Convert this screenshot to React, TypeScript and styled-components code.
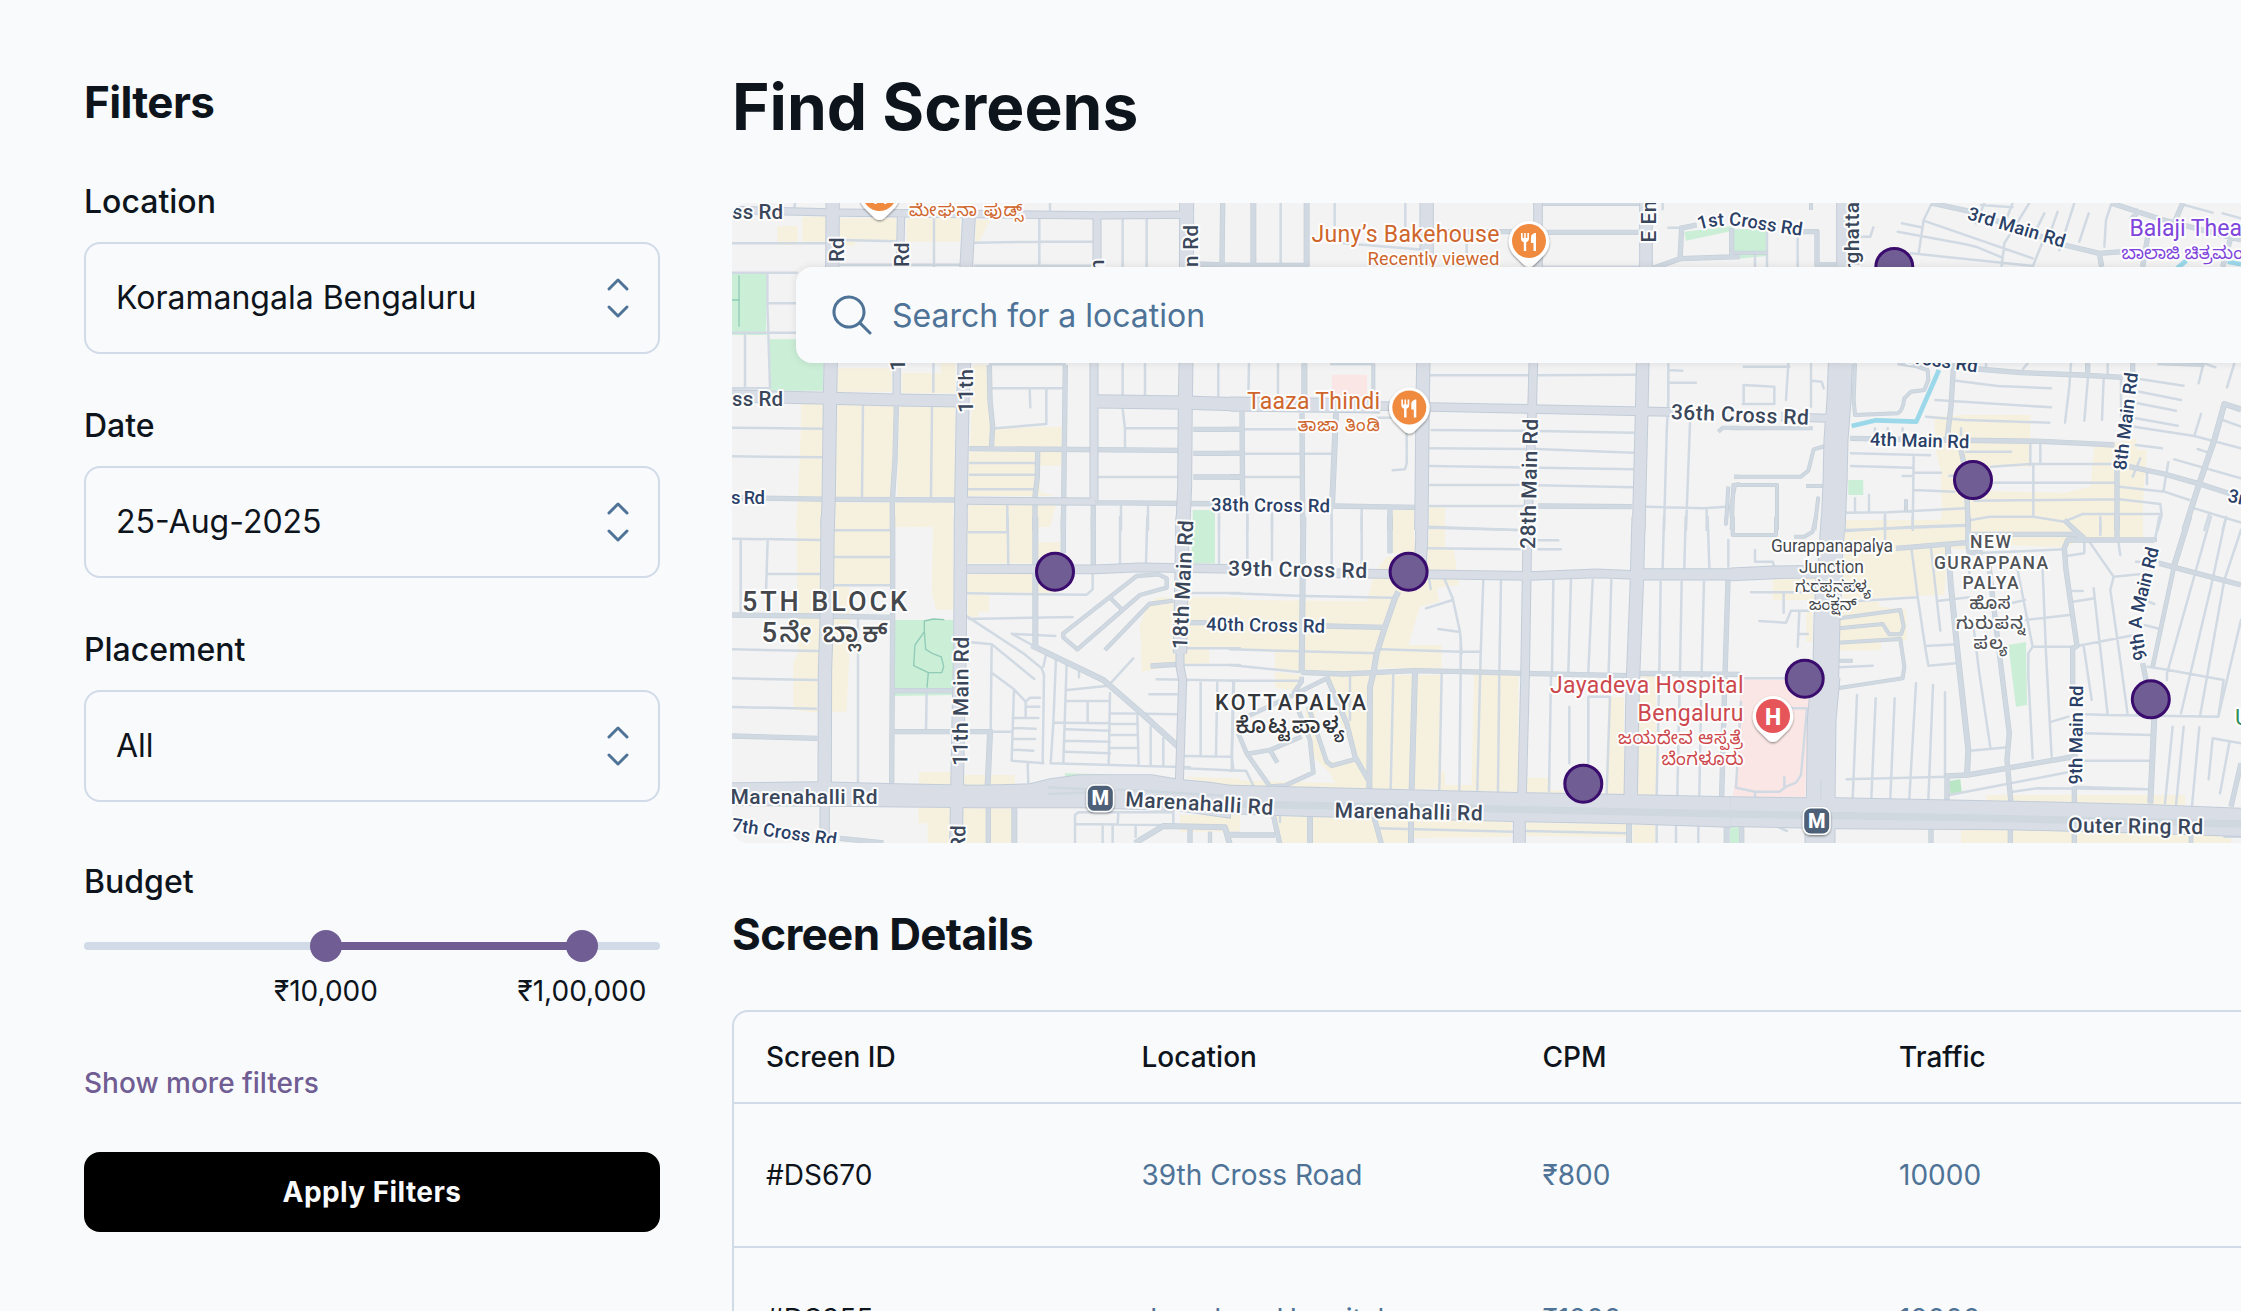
import React from 'react';
import styled, { createGlobalStyle } from 'styled-components';

const ink = '#0e141b';
const slate = '#4e7397';
const line = '#d0dbe7';
const purple = '#705d93';
const paper = '#f8fafc';

const GlobalStyle = createGlobalStyle`
  * { box-sizing: border-box; }
  html, body { margin: 0; padding: 0; background: ${paper}; }
  body { font-family: Inter, "Noto Sans", sans-serif; color: ${ink}; overflow: hidden; }
`;

const Page = styled.div`
  display: flex;
  gap: 8px;
  height: 1311px;
  padding-top: 35px;
  padding-left: 48px;
  overflow: hidden;
`;

const Sidebar = styled.aside`
  flex: none;
  width: 644px;
  display: flex;
  flex-direction: column;
`;

const SectionTitle = styled.h2`
  flex: none;
  margin: 0;
  padding: 40px 32px 24px 36px;
  font-size: 44px;
  line-height: 55px;
  font-weight: 700;
  letter-spacing: -0.015em;
`;

const DetailsTitle = styled(SectionTitle)`
  padding-left: 32px;
`;

const Field = styled.div`
  flex: none;
  display: flex;
  flex-direction: column;
  padding: 24px 32px 24px 36px;
`;

const Label = styled.span`
  display: block;
  font-size: 32px;
  line-height: 48px;
  font-weight: 500;
`;

const SelectBox = styled.button`
  display: flex;
  align-items: center;
  justify-content: space-between;
  height: 112px;
  margin-top: 16px;
  padding: 0 16px 0 30px;
  border: 2px solid ${line};
  border-radius: 16px;
  background: ${paper};
  color: ${ink};
  font: 400 32px/48px Inter, "Noto Sans", sans-serif;
  text-align: left;
`;

const BudgetHead = styled.div`
  padding: 32px 36px 0;
`;

const SliderRow = styled.div`
  padding: 24px 32px 0 36px;
`;

const Slider = styled.div`
  display: grid;
  grid-template-columns: 242px 256px 78px;
  align-items: center;
  height: 32px;
`;

const Segment = styled.div<{ $active?: boolean }>`
  position: relative;
  z-index: ${(p) => (p.$active ? 1 : 0)};
  height: 8px;
  background: ${(p) => (p.$active ? purple : line)};
  border-radius: ${(p) => (p.$active ? '0' : '4px')};
`;

const Thumb = styled.div<{ $end?: boolean }>`
  position: absolute;
  top: -12px;
  ${(p) => (p.$end ? 'right: -16px;' : 'left: -16px;')}
  width: 32px;
  height: 32px;
  border-radius: 50%;
  background: ${purple};
`;

const SliderValues = styled.div`
  display: grid;
  grid-template-columns: 114px 256px 256px;
  padding-top: 8px;
  span {
    font-size: 28px;
    line-height: 42px;
    text-align: center;
  }
`;

const MoreLink = styled.a`
  padding: 50px 36px 0;
  font-size: 28px;
  line-height: 42px;
  font-weight: 500;
  color: ${purple};
`;

const ApplyButton = styled.button`
  flex: none;
  margin: 48px 32px 0 36px;
  height: 80px;
  border: 0;
  border-radius: 16px;
  background: #000;
  color: ${paper};
  font: 700 28px/42px Inter, "Noto Sans", sans-serif;
  letter-spacing: 0.015em;
`;

const Main = styled.main`
  flex: none;
  width: 1920px;
  display: flex;
  flex-direction: column;
`;

const PageTitle = styled.h1`
  flex: none;
  margin: 0;
  padding: 32px 32px 56px;
  font-size: 64px;
  line-height: 80px;
  font-weight: 700;
`;

const MapFrame = styled.section`
  position: relative;
  flex: none;
  height: 640px;
  margin: 0 32px 24px;
  border-radius: 16px;
  overflow: hidden;
  background: #f3f3f3;
`;

const MapSvg = styled.svg`
  display: block;
  width: 1856px;
  height: 640px;
`;

const SearchBar = styled.div`
  position: absolute;
  top: 64px;
  left: 64px;
  right: 64px;
  height: 96px;
  display: flex;
  align-items: center;
  gap: 16px;
  padding: 0 32px;
  border-radius: 16px;
  background: ${paper};
  box-shadow: 0 0 8px rgba(0, 0, 0, 0.1);
  color: ${slate};
  font-size: 32px;
  line-height: 48px;
  span { padding-top: 2px; }
`;

const Table = styled.div`
  flex: none;
  margin: 24px 32px 0;
  border: 2px solid ${line};
  border-radius: 16px;
`;

const Row = styled.div<{ $head?: boolean }>`
  display: grid;
  grid-template-columns: 375.5px 401px 356.5px 1fr;
  align-items: center;
  height: ${(p) => (p.$head ? '90px' : '144px')};
  padding-left: 32px;
  border-top: ${(p) => (p.$head ? '0' : `2px solid ${line}`)};
  font-size: 28px;
  line-height: 42px;
  font-weight: ${(p) => (p.$head ? 500 : 400)};
`;

const Cell = styled.span<{ $muted?: boolean }>`
  color: ${(p) => (p.$muted ? slate : ink)};
`;

/* ---------- icons ---------- */

const Chevrons = () => (
  <svg width="48" height="48" viewBox="0 0 256 256" fill={slate}>
    <path d="M181.66,170.34a8,8,0,0,1,0,11.32l-48,48a8,8,0,0,1-11.32,0l-48-48a8,8,0,0,1,11.32-11.32L128,212.69l42.34-42.35A8,8,0,0,1,181.66,170.34Zm-96-84.68L128,43.31l42.34,42.35a8,8,0,0,0,11.32-11.32l-48-48a8,8,0,0,0-11.32,0l-48,48A8,8,0,0,0,85.66,85.66Z" />
  </svg>
);

const SearchIcon = () => (
  <svg width="48" height="48" viewBox="0 0 256 256" fill={slate}>
    <path d="M229.66,218.34l-50.07-50.06a88.11,88.11,0,1,0-11.31,11.31l50.06,50.07a8,8,0,0,0,11.32-11.32ZM40,112a72,72,0,1,1,72,72A72.08,72.08,0,0,1,40,112Z" />
  </svg>
);

/* ---------- map data: six tiles, each drawn at three units per pixel ---------- */

interface Tile {
  x: number;
  y: number;
  land: [string, string][];
  areas?: string[];
  band?: [number, string][];
  major: [number, string][];
  mid: [number, string][];
  minor: string;
  paths?: string;
  water?: string;
}

const beige = '#f6f1df';
const green = '#cbeed7';
const pink = '#fae7e5';

const tiles: Tile[] = [
  {
    x: 730, y: 200,
    land: [
      [beige, 'M142 78H203V135H142ZM217 50H290V125H217ZM330 55H500V125H375V137H330ZM530 55H692V125H530ZM738 60H780L748 125H735ZM322 505H485V575H322ZM515 518H632V490H676V580H515ZM730 495H770L782 680L780 740H720ZM322 612H495V890H316ZM508 620H675V890H502ZM212 612H282V900H275V990H197L205 880L212 690ZM795 685L995 680V740H790ZM718 755H995V797H930V875L975 888H712ZM316 908H482V990H316ZM495 908H670V980H495ZM715 915H978L960 980H715Z'],
      [green, 'M6 222H108V392L110 405H6ZM118 418H280V572H122ZM1388 930H1455V990H1388Z'],
    ],
    major: [
      [40, 'M308 9L307 200L302 490L300 600L296 900L293 985'],
      [42, 'M1370 9L1368 490L1366 600L1364 860L1358 990'],
      [38, 'M717 50L709 195L703 490L698 620L693 900L692 990'],
      [22, 'M6 30L330 38L700 42L1110 46L1390 44'],
      [36, 'M6 588L300 595L500 600L690 603'],
      [40, 'M1095 604L1370 608L1530 613'],
      [22, 'M700 902L1095 905'],
      [22, 'M513 50L510 200'],
      [22, 'M500 490V600'],
      [24, 'M1101 46V200L1092 490V900'],
    ],
    mid: [
      [14, 'M6 893L316 898L700 900M1095 908L1530 912M499 620L495 780L487 900V990M1006 495L1003 740L1000 990M778 495L780 600L788 680L784 745M718 746L1345 751M923 755L922 830L915 890V990M1478 9L1476 190M1390 192L1530 196M1390 688H1530M1390 760H1530M1390 831H1530M1090 900V990'],
    ],
    minor: 'M6 130H290M330 120L500 124M612 55V200L610 575M735 128L930 125H1090M928 55V197M1178 58V200M1250 58V200M330 194H690M735 197H1090M960 9V30M112 222V310H200M6 218H200M112 310L115 400L120 565M6 398H200M45 400V565M6 565H120M6 683L280 686M6 769L280 772M399 615L396 890M606 620L603 890M787 565H998M899 568L901 622M949 568V672L795 685M720 789H915M720 824H915M712 868H910M832 915V990M1178 490V585M1245 490V585M1465 490V590M1178 628L1185 685H1345M1185 685V745M1105 831H1345M1173 918V990M1254 918V990M1467 938V990M780 493H1005M195 9L193 25',
    paths: 'M27 226V380M6 300H30',
  },
  {
    x: 1230, y: 200,
    land: [
      [pink, 'M306 524H411V590H306Z'],
      [beige, 'M488 930H553V990H488ZM597 922H645V980H597Z'],
    ],
    major: [
      [40, 'M590 9V200L580 490L578 600L574 990'],
      [26, 'M924 9V200L910 490L906 640L893 990'],
      [38, 'M1248 9V200L1238 490L1235 640L1226 990'],
      [42, 'M0 612L450 618'],
      [26, 'M450 618L600 621L900 627L1240 634L1330 636'],
    ],
    mid: [
      [16, 'M70 9V200M230 9V200M223 490V600M318 640L306 920'],
      [14, 'M0 196H235M216 640L218 990M36 635L38 905M0 688H40M0 760H40M0 831H40M306 918L555 922M925 918L1205 920M480 928V990M640 95H845M935 97H1225M1350 85L1400 75M1355 85L1350 180M1270 205L1350 176L1530 170M1505 85V170'],
      [10, 'M936 12H1230M430 490V600M300 490H430M1465 695L1478 683H1530M1495 860L1488 975M1530 852L1510 855L1505 990M1512 830H1530'],
    ],
    minor: 'M152 9V197M314 9V75M526 9V80M340 130L590 150M710 130V197M930 200H1230M57 490L55 585M144 490V580M597 526H895M925 526L1218 524M605 690L870 692L1210 698M600 745L920 747L1210 758M600 798L1210 808M600 855L870 855L1210 862M600 918H925M600 983L860 990M45 688H200M45 761H305M45 831H208M440 653H530V790L525 808L488 811M395 928V990M305 928V990M126 940V990M52 940V990M1315 490V600L1310 700L1302 990M1380 670L1368 990M1318 510L1357 512M1318 548H1398M1430 925V990M1250 920L1420 925L1490 920M1298 9V28M1315 83H1350',
  },
  {
    x: 1731, y: 200,
    land: [
      [green, 'M6 88H108V168L6 178ZM352 840H397V885H352ZM-140 95L5 78V92L-135 122Z'],
      [beige, 'M610 650L700 645H898V800L750 800V872L1000 878L1078 860L1090 740L1215 715L1220 750H1248L1236 900V990H345V975L632 958L630 815L615 755Z'],
    ],
    major: [
      [66, 'M350 9V200'],
      [72, 'M328 490L324 600L315 720L312 850L306 990'],
      [24, 'M150 650L290 655'],
    ],
    mid: [
      [14, 'M600 9L720 35L1000 135L1105 160L1175 155M1105 160L1112 200M1140 9L1250 45L1290 58L1530 120M1355 9L1325 80M1225 30L1200 60M1250 110L1235 200M1500 110L1475 200M215 95H258V195H315M740 507L870 518L1050 525L1175 532M1205 490V520M668 490L660 620L648 720M358 715L640 720L930 724L1060 730L1150 735M690 750L705 820L712 990M1158 800V990M1195 800L1300 822L1400 850L1530 892M1070 490V520'],
      [16, 'M1530 628L1480 612L1450 720L1405 850L1360 990'],
      [10, 'M0 158H110M5 990L0 920L12 855H138V990M10 830H210L232 812L248 748L283 738M225 858H275M262 890L250 990M0 685H245M372 490L368 600L372 645L500 640Q515 635 520 595L540 575L580 570L592 540L590 510L555 498L500 490M525 898V935M1280 490L1420 495M240 9V30'],
    ],
    minor: 'M38 612V555L130 560V612H35M38 500H175M172 490L165 600M240 490V620M240 542L272 545L278 565M390 110H418L427 82M600 15L578 60L563 160M578 62L905 175M513 70L570 82M500 95L700 132L735 140L812 172M540 160L900 197M760 9L735 70M750 15L845 22M895 9L820 130L812 197M980 35L950 120M935 125L905 200M1030 9L985 150M1073 40L1045 125M1140 15L1125 60L1120 140M1360 15L1445 38M1475 40L1530 55M72 155V200M108 88V200M200 115V200M940 40L910 100M845 9L825 60M675 542L800 558L960 565M613 600L960 622M585 650L700 660L955 668M1020 490L1015 560L1002 668M1072 520L1060 662M1118 535L1113 660M1130 490V520M765 490V500M890 490L875 508M1230 538L1358 557M1225 575L1350 600M1220 610L1335 632M1215 655L1340 677M1210 680L1390 708L1530 745M1410 642L1390 708M1215 735L1293 745M1415 500L1403 550M1420 490L1453 502M1510 490L1488 562M1475 660L1530 680M1400 747L1430 757M1330 778L1530 835M1312 787L1298 870M1228 775L1205 830M1248 810V852M1165 860L1300 875L1375 900M1165 898L1288 912L1292 945L1280 990M1390 925L1530 968M1435 940L1420 990M1485 955L1475 990M780 800L898 792H1150M898 735V795M928 735V790M705 755H840M790 848H1160M730 902L1165 898M907 792V950M720 960L775 950H907L1000 965L1055 942H1290M1000 965L1025 990M1108 972V990M360 760L597 766M360 798L545 803M548 765L545 990M548 818H630M548 870L670 875M345 938L470 937L705 925M345 990L705 977M372 895V935M414 885V935M462 940V990M655 828L670 826M690 685V705M432 685V700M470 685V700M515 685V700M515 828H540M1170 540V650',
    water: 'M362 678L435 661L556 665L624 510M1338 205L1366 182M1490 185L1530 193',
  },
  {
    x: 730, y: 520,
    land: [
      [beige, 'M200 0H272V400L262 480V578L190 570V430L203 400ZM306 200H358V400L350 575H306ZM312 0H480V195H312ZM495 0H670V270H618L605 215L609 20L495 22ZM712 0H968L955 22H925V67H990V130H712ZM712 160H910V218H712ZM925 160H975V218H925ZM715 225H777V275H745V290H712ZM567 755H665V795H567ZM700 765H855V795H700ZM565 862H660V969H593V910H565ZM700 865H770V969H700ZM780 865H845V969H780ZM1280 232H1530V385H1235L1228 320L1250 260ZM1232 385H1438V430L1345 435L1235 455ZM1365 770L1530 775V797H1440ZM1350 885H1530V935H1350Z'],
      [green, 'M495 300H670V525L490 528ZM1385 0H1455V130H1385ZM1005 760L1130 763V770H1005Z'],
    ],
    areas: ['M0 790L265 787L500 793L740 797L900 793L960 778L1050 766H1265L1350 780L1440 788L1500 797V893L1340 870L1050 862H740L300 857L0 855Z'],
    band: [[8, 'M955 802L1080 808M955 822L1075 817M1160 808L1500 828']],
    major: [
      [40, 'M293 -10L290 300L285 450L284 800'],
      [38, 'M692 -10L690 380L685 600L678 975'],
      [26, 'M712 147L1095 148L1230 142L1530 147'],
      [40, 'M1358 -10L1350 400'],
      [24, 'M1350 390V440L1358 480L1348 790'],
      [28, 'M284 850V975'],
    ],
    mid: [
      [16, 'M916 -10V380M905 376L1120 480L1230 575L1345 680M780 640L773 795M853 865V975M1215 969L1300 918L1485 922L1500 975'],
      [14, 'M488 -10V300L485 790M6 285L270 288L490 292M490 512H670M492 635H788M775 862V975M6 648L262 655M1090 -10V135M1000 -10V100M330 955L460 969M1380 925V975M1262 438L1340 433M1380 308H1430'],
      [11, 'M1220 168L1000 340V352L1042 388L1230 225L1310 203V175L1285 163ZM1135 228L1175 268M1125 390L1258 252L1330 242M1440 935V969M1490 942H1530'],
    ],
    minor: 'M6 56L270 60M32 60V280M113 60L108 215M113 162H270M313 31H480M313 111H480M313 196H480M6 388L265 393M6 475L260 480M6 561L258 566M384 300V790M716 37H830M833 -10L835 135M712 220L1070 224L1088 208V160M718 297L1028 291M712 290L880 400L935 445L942 465L938 728M722 367L785 373L913 477M785 373L782 630M785 458L852 508L887 545M852 508L845 722L940 730M887 590V545L900 533H930M887 560H928M848 594H925M848 624L917 626M848 657H915M848 689L910 692M788 635H845M893 730L895 793M845 341L976 348M845 341L912 378M948 405L940 440M978 415L970 610L962 730L1380 742M1010 430L1000 730M1047 450V472M1012 510L1135 497L1210 415M1140 520L1136 735M1012 543H1140M1073 545V608M975 608L1140 610M1140 580L1340 583M1222 585L1226 735M1140 612H1222M1010 628L1140 632M1005 662L1140 665M1005 695L1140 700M1145 645H1222M1142 684H1222M1262 620V735M1300 655V738M1170 -10V135M1252 -10L1248 130M1467 -10V130M1360 385H1530M1365 435H1530M1280 478L1530 482M1412 482V705M1462 482L1458 705M1510 482L1505 705L1510 750M1258 523H1340M1365 708L1505 710M1365 745L1530 752M1035 969V885L1045 877H1330V910M1035 912L1295 915M1165 880L1163 912M1118 915V969M1148 915V969M1217 920V950M590 515L588 630M1380 219H1530',
    paths: 'M643 299L610 297L583 303V335L587 388L610 402L634 411L641 440L635 458H595L551 437L555 375L583 335M595 458L591 503',
  },
  {
    x: 1230, y: 520,
    land: [
      [beige, 'M488 0H553V100H488ZM597 0H645V80L672 90L687 195L620 205L628 245L570 260L535 375H635V445H425L455 330L495 240L410 243L435 155L470 110H553V60H597ZM0 230L60 240L410 243L495 240L460 330L425 440L415 455H220L135 450V395L0 390ZM135 455L215 465L190 510L137 505ZM295 465H630V808H418L375 720L330 600ZM225 565L250 560L290 725L375 722L418 806L325 806L300 760L240 700ZM0 780L330 790V806L0 800ZM630 755H645V795H725L732 465H865V815H630ZM135 888L250 890L845 905V950L550 955V975H155ZM890 908L1190 912V952L890 948ZM1208 915H1275V975H1208ZM890 773H955V810H1000V820H890ZM1135 530H1182V825H1127ZM1225 465H1278V828H1222Z'],
      [green, 'M1500 922H1530V975H1500Z'],
      [pink, 'M1522 740H1530V832H1513Z'],
    ],
    areas: ['M0 797L420 808L900 820L1190 825L1501 832V920L1190 910L850 903L240 888L0 880Z'],
    band: [[22, 'M0 852L600 863L1501 882']],
    major: [
      [36, 'M575 -10V60L570 150'],
      [26, 'M893 -10L885 480L876 830'],
      [36, 'M868 890V975'],
      [40, 'M1226 -10L1220 200L1208 500L1202 835'],
      [26, 'M320 160L600 163L900 168L1100 160L1220 165'],
      [34, 'M1220 163H1530'],
    ],
    mid: [
      [16, 'M220 -10L215 455M505 215L495 235L462 330L440 400L430 460L420 500L418 808M1197 912V975M1490 920V975M543 905V975M240 888V975M555 455L545 808'],
      [14, 'M215 457L340 462L430 458L550 452L700 455L880 460L1190 467L1240 460L1530 463M285 318L462 322M480 -10V100M1494 180L1485 463L1475 830M433 895L455 975M130 885L150 975M0 945H135M290 470L350 610L375 710L415 780'],
      [12, 'M290 475L190 525L55 588M205 570L240 660L250 758L165 797L120 800L50 700L25 640M50 702L120 690L215 650M120 690L142 728M235 560L290 725L305 737L375 718M215 470V485L190 520'],
    ],
    minor: 'M52 -10V120M126 -10V120M305 -10V135M395 -10V135M600 20L860 30M925 61H985M590 85L870 88M925 88H993M0 220L225 228L490 233M0 388L440 400M455 388L690 395H750M0 435L215 457M0 482H215M12 482L5 750M0 752H48L70 797M360 470V600M490 460L482 808M635 460L628 808M692 350V460L688 810M645 180L668 235L690 335L695 400M668 240L588 265M690 336L625 327M760 180L752 400L742 810M813 180L808 455L804 812M598 180L602 207M970 180L966 455M1023 180L1015 455M1088 180L1075 455M1144 180L1136 455M963 470L957 812M1018 560V730M1135 530H1075V730M1140 530L1130 820M1292 185L1288 455L1280 825M1355 185L1350 455L1342 825M1422 185L1415 455L1408 825M1302 -10L1298 145M1367 -10L1363 145M1433 -10L1438 145M1495 60V140M1487 -10V15M1510 -10V45H1530M1280 912V975M1338 912V975M1405 915V975M445 925L850 935M888 933L1190 940M150 885V905',
  },
  {
    x: 1731, y: 520,
    land: [
      [pink, 'M30 478L160 480L235 540L222 832H5L15 760L25 550Z'],
      [beige, 'M340 0H1236V60H1040L1010 80H940L700 70L720 90L650 85L640 225L480 230V165H340ZM125 160H265V240H125ZM325 160H480V230L340 240ZM325 245H445V260L525 268L528 360L450 365V390L325 392ZM225 270H245V365H225ZM765 825H1363V855H765ZM690 930H1340L1500 955V975H690Z'],
      [green, 'M832 375L885 366L888 555L855 560ZM0 922H22V975H0Z'],
      ['#b9e7c5', 'M655 783L688 778L692 815L658 822Z'],
    ],
    areas: ['M-2 832L225 835L320 835L850 845L1250 855L1530 866V948L1250 938L840 928L315 925L-2 918Z'],
    band: [[22, 'M-2 882L700 893L1530 912'], [5, 'M270 780V838']],
    major: [
      [38, 'M0 163L130 157L270 155'],
      [72, 'M307 -10L295 160'],
      [78, 'M295 150L288 300L284 480'],
      [86, 'M284 470L272 600L269 845'],
      [90, 'M267 915V975'],
    ],
    mid: [
      [14, 'M495 85L705 68M712 -10L710 70L715 98H755M770 105L800 360L835 640L828 720L840 850M648 840V768L710 765L1040 708M720 43H1035L1060 55M1270 65V60H1010L1000 85L1005 150L1038 378L1025 385V500M1030 800V850M1158 -10V55M1285 130L1530 195M1235 430L1245 480M1530 730L1500 860M838 930V975M600 925V975M32 920V975M1030 940V975'],
      [16, 'M650 75L660 200L680 400L712 690L708 765M1270 590L1258 850M1375 -10L1330 135'],
      [12, 'M1330 135L1265 440M1000 0L1060 55M1380 945V975'],
      [10, 'M320 505L515 475L520 440L508 357L320 368M325 295L508 270L518 320L510 343H475L455 312L325 325M5 -10V45H135V-10M190 50H220L245 35L255 -10M325 422H365'],
    ],
    minor: 'M345 33L545 20L705 15M462 -10V80M545 -10V20M72 90V125H125L130 140M60 217H245M158 220V278M85 303L165 308L180 272H235M205 275L200 380M205 342H230M325 442L425 437M340 245L560 232M542 90L560 230L582 378L592 437L675 430M600 85L628 332M582 378L680 373M618 243L715 232M725 300L745 460L778 682M718 692L830 682M715 150V170M378 525L365 835M434 535L421 835M491 535L478 835M555 490L535 835M606 495L592 840M642 517V765M347 778L650 770M655 825L1010 757M845 815L920 805L1250 808M1030 800L1250 808M860 150L905 380L892 400V470L905 715M935 150L945 400L962 710M905 380H1030M962 605L1012 590M1060 583L1130 585L1462 590L1478 480L1300 448L1250 440M1060 640L1262 645M1060 722H1258M1058 378L1082 540M1088 205L1105 360L1130 583M1075 65L1148 170L1138 210L1165 400L1190 583M1148 170L1225 163M1060 65V100L1005 108M1038 378L1210 345M1025 245L1092 235M1025 213H1055M885 300L1015 285M845 248L882 240M720 100L1000 88M1108 -10V45M1285 -10L1272 60M1162 65L1168 105M1215 125H1285M1240 315L1290 328M1240 240L1270 252M1440 -10L1395 150L1308 460V480M1485 -10L1440 200L1350 580M1530 30L1480 180L1408 583M1530 300L1462 590M1325 620L1302 850M1358 620L1335 855M1405 622L1383 858M1530 670L1445 655L1433 778M1495 668L1467 820M140 920L168 933M1480 950H1530M42 475H160M165 565H225M228 565L210 765L195 788L165 800L145 815L72 815L15 803L30 545M160 772V800M72 815V830',
  },
];

const place = (t: Tile) => `translate(${t.x} ${t.y}) scale(0.33333)`;

const each = (render: (t: Tile) => React.ReactNode) =>
  tiles.map((t, i) => (
    <g key={i} transform={place(t)}>
      {render(t)}
    </g>
  ));

const MapBase = () => (
  <g fill="none" strokeLinejoin="round">
    {each((t) => t.land.map(([c, d], i) => <path key={i} d={d} fill={c} />))}
    {each((t) => t.paths && <path d={t.paths} stroke="#8fcbb6" strokeWidth="4" />)}
    {each((t) => <path d={t.minor} stroke="#d1dae3" strokeWidth="7.5" strokeLinecap="round" />)}
    {each((t) => t.mid.map(([w, d], i) => <path key={i} d={d} stroke="#c6d0d9" strokeWidth={w + 2} />))}
    {each((t) => t.mid.map(([w, d], i) => <path key={i} d={d} stroke="#d0d9e1" strokeWidth={w - 2} />))}
    {each((t) => t.water && <path d={t.water} stroke="#9bd8ea" strokeWidth="14" />)}
    {each((t) => t.areas?.map((d, i) => <path key={i} d={d} stroke="#c2ccd8" strokeWidth="6" />))}
    {each((t) => t.major.map(([w, d], i) => <path key={i} d={d} stroke="#c2ccd8" strokeWidth={w + 3} />))}
    {each((t) => t.areas?.map((d, i) => <path key={i} d={d} fill="#d9dee6" />))}
    {each((t) => t.major.map(([w, d], i) => <path key={i} d={d} stroke="#d9dee6" strokeWidth={w - 3} />))}
    {each((t) => t.band?.map(([w, d], i) => <path key={i} d={d} stroke="#d0d8df" strokeWidth={w} />))}
  </g>
);

const road = '#3a475a';
const street = '#2a4066';
const orange = '#cf652a';
const red = '#cd484c';
const grey = '#505357';

interface LabelData {
  t: string;
  x: number;
  y: number;
  s: number;
  len?: number;
  r?: number;
  c?: string;
  w?: number;
}

const labels: LabelData[] = [
  { t: 'ss Rd', x: 732, y: 218.5, s: 20.5, len: 51 },
  { t: 'ss Rd', x: 732, y: 406.3, s: 20.5, len: 51 },
  { t: 's Rd', x: 731, y: 504, s: 18.5, len: 34, c: street },
  { t: 'Rd', x: 843.5, y: 262, s: 20.5, r: -90, len: 24.5 },
  { t: 'Rd', x: 908.5, y: 267, s: 20.5, r: -90, len: 24.5 },
  { t: 'n Rd', x: 1198, y: 267, s: 20.5, r: -90, len: 42 },
  { t: 'n', x: 1104, y: 271, s: 20.5, r: -90 },
  { t: '1', x: 905, y: 371, s: 20.5, r: -90 },
  { t: '11th', x: 973, y: 413, s: 20.5, r: -90, len: 44 },
  { t: 'ಮೇಘನಾ ಫುಡ್ಸ್', x: 909, y: 215.5, s: 17.5, len: 114, c: orange, w: 400 },
  { t: 'Juny’s Bakehouse', x: 1311.5, y: 242, s: 23, len: 188, c: orange, w: 400 },
  { t: 'Recently viewed', x: 1367.5, y: 265.3, s: 18.5, len: 132, c: orange, w: 400 },
  { t: 'Taaza Thindi', x: 1247, y: 408.5, s: 23, len: 133, c: orange, w: 400 },
  { t: 'ತಾಜಾ ತಿಂಡಿ', x: 1297.5, y: 431, s: 17.5, len: 82.5, c: orange, w: 400 },
  { t: '36th Cross Rd', x: 1670.7, y: 419, s: 21, r: 2.4, len: 138 },
  { t: 'E En', x: 1655.5, y: 242.5, s: 21, r: -90, len: 42 },
  { t: 'rghatta', x: 1858.5, y: 271, s: 21, r: -90, len: 69 },
  { t: '3rd Main Rd', x: 1966.5, y: 219, s: 18.5, r: 16.5, len: 101, c: street },
  { t: 'Balaji Theatre', x: 2129.5, y: 236.3, s: 23, c: '#7f45dc', w: 400 },
  { t: 'ಬಾಲಾಜಿ ಚಿತ್ರಮಂದಿರ', x: 2121.5, y: 259, s: 18, c: '#7f45dc', w: 400 },
  { t: 'Cross Rd', x: 1903, y: 362, s: 18.5, r: 8, c: street },
  { t: '4th Main Rd', x: 1869.7, y: 445.5, s: 18.5, r: 1.6, len: 99.5, c: street },
  { t: '8th Main Rd', x: 2126, y: 470.7, s: 18.5, r: -83, len: 98, c: street },
  { t: '3rd', x: 2227, y: 501.5, s: 18.5, r: 12, c: street },
  { t: '38th Cross Rd', x: 1211, y: 511, s: 18.5, r: 0.6, len: 119, c: street },
  { t: '28th Main Rd', x: 1535, y: 549, s: 21, r: -88.7, len: 130 },
  { t: '18th Main Rd', x: 1187, y: 649.5, s: 21, r: -87.2, len: 129 },
  { t: '39th Cross Rd', x: 1228, y: 575.5, s: 21, r: 1, len: 139 },
  { t: '40th Cross Rd', x: 1206, y: 630.5, s: 18.5, r: 1, len: 119, c: street },
  { t: '5TH BLOCK', x: 742, y: 610.5, s: 27, len: 165, c: '#44484d' },
  { t: '5ನೇ ಬ್ಲಾಕ್', x: 761.5, y: 642.3, s: 27.5, len: 126, c: '#44484d' },
  { t: '11th Main Rd', x: 967.3, y: 766, s: 21, r: -89.3, len: 129 },
  { t: 'Marenahalli Rd', x: 730.5, y: 804, s: 21, len: 147 },
  { t: '7th Cross Rd', x: 731, y: 831, s: 18.5, r: 8.2, len: 106, c: street },
  { t: 'Rd', x: 965, y: 850, s: 20.5, r: -89, len: 24.5 },
  { t: 'Marenahalli Rd', x: 1125, y: 806.3, s: 21, r: 3.3, len: 148 },
  { t: 'Marenahalli Rd', x: 1334.5, y: 817.5, s: 21, r: 1.2, len: 148 },
  { t: 'KOTTAPALYA', x: 1215, y: 710, s: 21.5, len: 151, c: '#33363b' },
  { t: 'ಕೊಟ್ಟಪಾಳ್ಯ', x: 1235.5, y: 733, s: 22.5, len: 109, c: '#33363b' },
  { t: 'Jayadeva Hospital', x: 1550, y: 693.3, s: 23, len: 193.5, c: red, w: 400 },
  { t: 'Bengaluru', x: 1637.5, y: 721, s: 23, len: 106, c: red, w: 400 },
  { t: 'ಜಯದೇವ ಆಸ್ಪತ್ರೆ', x: 1618, y: 743.5, s: 18, len: 125, c: red, w: 400 },
  { t: 'ಬೆಂಗಳೂರು', x: 1661.5, y: 765, s: 18, len: 82, c: red, w: 400 },
  { t: 'Gurappanapalya', x: 1771, y: 552.3, s: 17.5, len: 122, c: '#45484c', w: 400 },
  { t: 'Junction', x: 1799, y: 572.7, s: 17.5, len: 65, c: '#45484c', w: 400 },
  { t: 'ಗುರಪ್ಪನಪಳ್ಯ', x: 1793.5, y: 592, s: 16.5, len: 76, c: '#45484c', w: 400 },
  { t: 'ಜಂಕ್ಷನ್', x: 1808.5, y: 610, s: 16.5, len: 48, c: '#45484c', w: 400 },
  { t: 'NEW', x: 1970, y: 548, s: 17.5, len: 41, c: grey },
  { t: 'GURAPPANA', x: 1934, y: 568.5, s: 17.5, len: 114, c: grey },
  { t: 'PALYA', x: 1962.5, y: 588.7, s: 17.5, len: 56, c: grey },
  { t: 'ಹೊಸ', x: 1969.5, y: 608.5, s: 17.5, len: 41, c: grey },
  { t: 'ಗುರುಪನ್ನ', x: 1956, y: 629, s: 17.5, len: 69, c: grey },
  { t: 'ಪಲ್ಯ', x: 1973.5, y: 649, s: 17.5, len: 34, c: grey },
  { t: '9th Main Rd', x: 2082, y: 784.5, s: 18.5, r: -89.4, len: 99, c: street },
  { t: 'Outer Ring Rd', x: 2068, y: 832.3, s: 21, r: 0.8, len: 135 },
  { t: 'U', x: 2235, y: 725, s: 22.5, c: '#2f8f5b', w: 400 },
];

const LabelText = styled.text`
  font-family: Roboto, "Noto Sans Kannada", "Noto Sans", sans-serif;
  paint-order: stroke;
  stroke: rgba(255, 255, 255, 0.95);
  stroke-width: 4px;
  stroke-linejoin: round;
`;

const MapLabels = () => (
  <g>
    {labels.map((l, i) => (
      <LabelText
        key={i}
        x={l.x}
        y={l.y}
        fontSize={l.s}
        fontWeight={l.w ?? 500}
        fill={l.c ?? road}
        textLength={l.len}
        transform={l.r ? `rotate(${l.r} ${l.x} ${l.y})` : undefined}
      >
        {l.t}
      </LabelText>
    ))}
    <path id="first-cross" d="M1699 230Q1722 223 1745 227T1806 236.5" fill="none" />
    <LabelText fontSize="18.5" fontWeight="500" fill={street}>
      <textPath href="#first-cross" textLength="104">1st Cross Rd</textPath>
    </LabelText>
    <path id="ninth-a" d="M2147.5 659Q2139 625 2143.5 612Q2149 590 2160 545" fill="none" />
    <LabelText fontSize="18.5" fontWeight="500" fill={street}>
      <textPath href="#ninth-a" textLength="113">9th A Main Rd</textPath>
    </LabelText>
  </g>
);

const Pin = ({ x, y, color, children }: { x: number; y: number; color: string; children: React.ReactNode }) => (
  <g transform={`translate(${x} ${y})`}>
    <path
      d="M0 26C-2.500 26-4 25-6 23L-15.500 13.500A20.300 20.300 0 1 1 15.500 13.500L6 23C4 25 2.500 26 0 26Z"
      fill="#fff"
      filter="url(#pin-shadow)"
    />
    <circle r="17" fill={color} />
    {children}
  </g>
);

const Cutlery = () => (
  <path
    fill="#fff"
    d="M-8 -8H-6.300V-3H-4.800V-8H-3.200V-3H-1.700V-8H0V-2.500C0 -0.500 -1.300 0.900 -2.800 1.300V10H-5.200V1.300C-6.700 0.900 -8 -0.500 -8 -2.500ZM7 -8V10H4.500V2H2V-3.500C2 -6.500 4.500 -8 7 -8Z"
  />
);

const Metro = ({ x, y }: { x: number; y: number }) => (
  <g transform={`translate(${x} ${y})`}>
    <rect x="-14" y="-14" width="28" height="28" rx="8" fill="#fff" filter="url(#pin-shadow)" />
    <rect x="-12.500" y="-12.500" width="25" height="25" rx="6.500" fill="#4d6078" />
    <text y="7" textAnchor="middle" fontFamily="Roboto, sans-serif" fontSize="20" fontWeight="800" fill="#fff">M</text>
  </g>
);

const screens: [number, number][] = [
  [1055, 571.7],
  [1408.6, 571.7],
  [1583.3, 783.7],
  [1804.7, 678.7],
  [2150.8, 699.3],
  [1973, 480],
  [1894.3, 267],
];

const CityMap = () => (
  <MapSvg viewBox="732 203 1856 640">
    <defs>
      <filter id="pin-shadow" x="-30%" y="-30%" width="160%" height="170%">
        <feDropShadow dx="0" dy="1.200" stdDeviation="1.200" floodColor="#000" floodOpacity="0.45" />
      </filter>
    </defs>
    <MapBase />
    <MapLabels />
    <Pin x={879.5} y={194} color="#ef8a3f"><Cutlery /></Pin>
    <Pin x={1529} y={241} color="#ef8a3f"><Cutlery /></Pin>
    <Pin x={1409.3} y={407.5} color="#ef8a3f"><Cutlery /></Pin>
    <Pin x={1773} y={716} color="#e5555a">
      <text y="8.500" textAnchor="middle" fontFamily="Roboto, sans-serif" fontSize="23" fontWeight="800" fill="#fff">H</text>
    </Pin>
    <Metro x={1100.3} y={798.3} />
    <Metro x={1816.7} y={821} />
    {screens.map(([cx, cy]) => (
      <circle key={cx} cx={cx} cy={cy} r="18.500" fill={purple} stroke="#390c6d" strokeWidth="3" />
    ))}
  </MapSvg>
);

const filters = [
  ['Location', 'Koramangala Bengaluru'],
  ['Date', '25-Aug-2025'],
  ['Placement', 'All'],
];

const rows = [
  ['#DS670', '39th Cross Road', '₹800', '10000'],
  ['#DS355', 'Jayadeva Hospital', '₹1200', '12000'],
];

export default function App() {
  return (
    <>
      <GlobalStyle />
      <Page>
        <Sidebar>
          <SectionTitle>Filters</SectionTitle>
          {filters.map(([name, value]) => (
            <Field key={name}>
              <Label>{name}</Label>
              <SelectBox>
                {value}
                <Chevrons />
              </SelectBox>
            </Field>
          ))}
          <BudgetHead>
            <Label>Budget</Label>
          </BudgetHead>
          <SliderRow>
            <Slider>
              <Segment />
              <Segment $active>
                <Thumb />
                <Thumb $end />
              </Segment>
              <Segment />
            </Slider>
            <SliderValues>
              <span />
              <span>₹10,000</span>
              <span>₹1,00,000</span>
            </SliderValues>
          </SliderRow>
          <MoreLink>Show more filters</MoreLink>
          <ApplyButton>Apply Filters</ApplyButton>
        </Sidebar>
        <Main>
          <PageTitle>Find Screens</PageTitle>
          <MapFrame>
            <CityMap />
            <SearchBar>
              <SearchIcon />
              <span>Search for a location</span>
            </SearchBar>
          </MapFrame>
          <DetailsTitle>Screen Details</DetailsTitle>
          <Table>
            <Row $head>
              <Cell>Screen ID</Cell>
              <Cell>Location</Cell>
              <Cell>CPM</Cell>
              <Cell>Traffic</Cell>
            </Row>
            {rows.map((r) => (
              <Row key={r[0]}>
                {r.map((value, i) => (
                  <Cell key={i} $muted={i > 0}>{value}</Cell>
                ))}
              </Row>
            ))}
          </Table>
        </Main>
      </Page>
    </>
  );
}
